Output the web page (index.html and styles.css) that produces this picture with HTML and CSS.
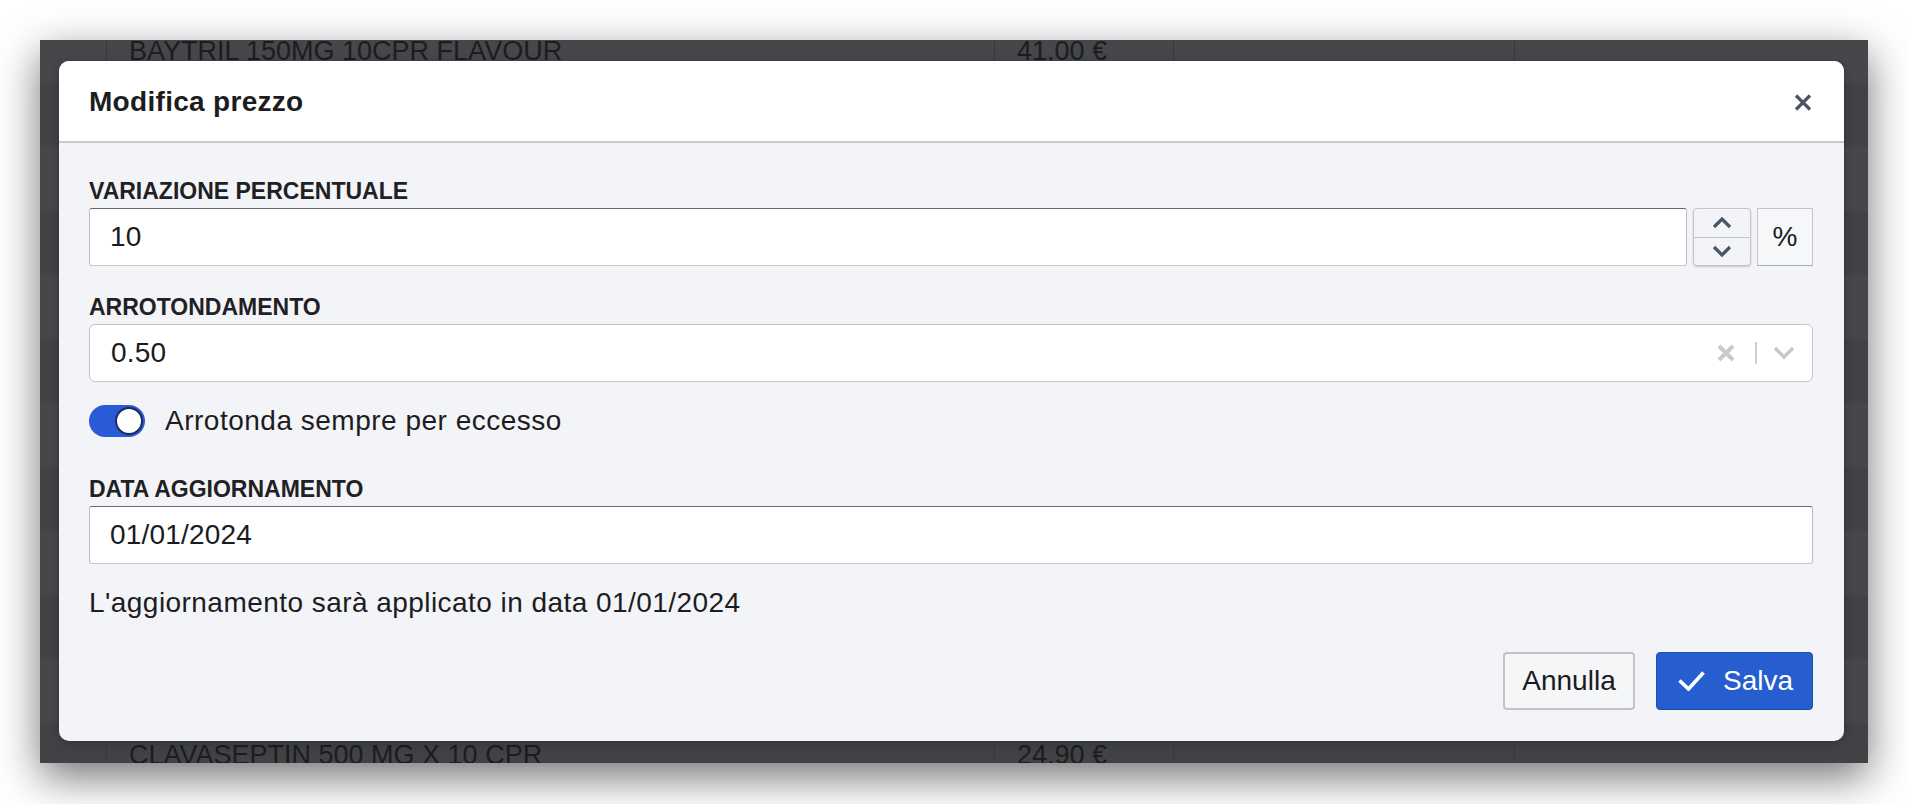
FILE: index.html
```html
<!DOCTYPE html>
<html lang="it">
<head>
<meta charset="utf-8">
<title>Modifica prezzo</title>
<link rel="stylesheet" href="styles.css">
</head>
<body>
<div class="stage">
  <div class="backdrop">
    <div class="table">
      <div class="row light"><span class="cell"></span><span class="cell">BAYTRIL 150MG 10CPR FLAVOUR</span><span class="cell">41.00 €</span><span class="cell"></span><span class="cell"></span></div>
      <div class="row dark"><span class="cell"></span><span class="cell"></span><span class="cell"></span><span class="cell"></span><span class="cell"></span></div>
      <div class="row light"><span class="cell"></span><span class="cell"></span><span class="cell"></span><span class="cell"></span><span class="cell"></span></div>
      <div class="row dark"><span class="cell"></span><span class="cell"></span><span class="cell"></span><span class="cell"></span><span class="cell"></span></div>
      <div class="row light"><span class="cell"></span><span class="cell"></span><span class="cell"></span><span class="cell"></span><span class="cell"></span></div>
      <div class="row dark"><span class="cell"></span><span class="cell"></span><span class="cell"></span><span class="cell"></span><span class="cell"></span></div>
      <div class="row light"><span class="cell"></span><span class="cell"></span><span class="cell"></span><span class="cell"></span><span class="cell"></span></div>
      <div class="row dark"><span class="cell"></span><span class="cell"></span><span class="cell"></span><span class="cell"></span><span class="cell"></span></div>
      <div class="row light"><span class="cell"></span><span class="cell"></span><span class="cell"></span><span class="cell"></span><span class="cell"></span></div>
      <div class="row dark"><span class="cell"></span><span class="cell"></span><span class="cell"></span><span class="cell"></span><span class="cell"></span></div>
      <div class="row light"><span class="cell"></span><span class="cell"></span><span class="cell"></span><span class="cell"></span><span class="cell"></span></div>
      <div class="row dark"><span class="cell"></span><span class="cell">CLAVASEPTIN 500 MG X 10 CPR</span><span class="cell">24.90 €</span><span class="cell"></span><span class="cell"></span></div>
    </div>

    <div class="modal">
      <div class="modal-header">
        <h2 class="modal-title">Modifica prezzo</h2>
        <button class="close-btn" aria-label="Chiudi">
          <svg width="18" height="17" viewBox="0 0 18 17"><path d="M2 1.5 L16 15.5 M16 1.5 L2 15.5" stroke="#4a5466" stroke-width="3.2" fill="none"/></svg>
        </button>
      </div>
      <div class="modal-body">
        <div class="field">
          <div class="field-label">VARIAZIONE PERCENTUALE</div>
          <div class="input-group">
            <div class="text-input">10</div>
            <div class="spinner">
              <div class="spin-half">
                <svg width="20" height="12" viewBox="0 0 20 12"><path d="M2 10 L10 2 L18 10" stroke="#4a5568" stroke-width="3.2" fill="none"/></svg>
              </div>
              <div class="spin-half spin-bottom">
                <svg width="20" height="12" viewBox="0 0 20 12"><path d="M2 2 L10 10 L18 2" stroke="#4a5568" stroke-width="3.2" fill="none"/></svg>
              </div>
            </div>
            <div class="addon">%</div>
          </div>
        </div>

        <div class="field field-gap">
          <div class="field-label">ARROTONDAMENTO</div>
          <div class="select">
            <div class="select-value">0.50</div>
            <svg class="clear-icon" width="18" height="18" viewBox="0 0 18 18"><path d="M2 2 L16 16 M16 2 L2 16" stroke="#c9c9c9" stroke-width="4" fill="none"/></svg>
            <span class="select-sep"></span>
            <svg class="chev-icon" width="22" height="14" viewBox="0 0 22 14"><path d="M2 2 L11 11 L20 2" stroke="#c9c9c9" stroke-width="3.4" fill="none"/></svg>
          </div>
        </div>

        <div class="toggle-row">
          <span class="toggle"><span class="knob"></span></span>
          <span class="toggle-text">Arrotonda sempre per eccesso</span>
        </div>

        <div class="field field-gap-lg">
          <div class="field-label">DATA AGGIORNAMENTO</div>
          <div class="text-input">01/01/2024</div>
        </div>

        <p class="note">L'aggiornamento sarà applicato in data 01/01/2024</p>

        <div class="footer">
          <button class="btn btn-secondary">Annulla</button>
          <button class="btn btn-primary">
            <svg width="27" height="20" viewBox="0 0 27 20"><path d="M1.5 9.5 L10.5 18 L25.5 1.5" stroke="#ffffff" stroke-width="3.6" fill="none"/></svg>
            <span>Salva</span>
          </button>
        </div>
      </div>
    </div>
  </div>
</div>
</body>
</html>
```

FILE: styles.css
```css
* { box-sizing: border-box; }

html, body {
  margin: 0;
  padding: 0;
  background: #ffffff;
  width: 1908px;
  height: 804px;
  overflow: hidden;
  font-family: "Liberation Sans", Arial, sans-serif;
}

.stage {
  padding: 40px 40px 0 40px;
}

.backdrop {
  position: relative;
  height: 723px;
  background: #434549;
  overflow: hidden;
  box-shadow: 0 14px 40px rgba(0, 0, 0, 0.55);
}

.table {
  margin-top: -21px;
}

.row {
  display: grid;
  grid-template-columns: 67px 888px 179px 341px 1fr;
  height: 64px;
  line-height: 64px;
  font-size: 27px;
  color: #1c1d20;
  white-space: nowrap;
}

.row.light { background: #45474b; }
.row.dark { background: #414246; }

.cell {
  border-right: 1px solid #38393d;
  padding-left: 22px;
  overflow: hidden;
}
.cell:last-child { border-right: none; }

.modal {
  position: absolute;
  left: 19px;
  top: 21px;
  width: 1785px;
  border-radius: 10px;
  overflow: hidden;
  background: #f3f4f8;
  box-shadow: 0 2px 10px rgba(0, 0, 0, 0.25);
}

.modal-header {
  height: 82px;
  background: #ffffff;
  border-bottom: 2px solid #c9cacf;
  display: flex;
  align-items: center;
  justify-content: space-between;
  padding: 2px 32px 0 30px;
}

.modal-title {
  margin: 0;
  font-size: 28px;
  font-weight: 700;
  letter-spacing: 0.3px;
  color: #1c1d20;
}

.close-btn {
  border: none;
  background: transparent;
  padding: 0;
  display: flex;
  width: 18px;
  height: 17px;
}

.modal-body {
  padding: 34px 31px 31px 30px;
}

.field-label {
  font-size: 23px;
  line-height: 28px;
  font-weight: 700;
  color: #1f2124;
  margin-bottom: 3px;
}

.field-gap { margin-top: 27px; }
.field-gap-lg { margin-top: 38px; }

.input-group {
  display: flex;
  gap: 6px;
  height: 58px;
}

.text-input {
  flex: 1;
  height: 58px;
  background: #ffffff;
  border: 1px solid #bcbdc1;
  border-top-color: #66686c;
  border-bottom-color: #c4c5c9;
  border-radius: 3px;
  padding: 0 20px;
  font-size: 28px;
  letter-spacing: 0.2px;
  line-height: 56px;
  color: #1a1b1e;
}

.spinner {
  width: 58px;
  height: 58px;
  border: 1px solid #c3c5ca;
  border-radius: 4px;
  background: #f3f4f7;
  display: flex;
  flex-direction: column;
  box-shadow: 0 1px 2px rgba(0, 0, 0, 0.18);
}

.spin-half {
  flex: 1;
  display: flex;
  align-items: center;
  justify-content: center;
}

.spin-bottom {
  border-top: 1px solid #c3c5ca;
}

.addon {
  width: 56px;
  height: 58px;
  background: #f6f7f9;
  border: 1px solid #c4c6ca;
  border-bottom-color: #a9acb1;
  display: flex;
  align-items: center;
  justify-content: center;
  font-size: 28px;
  color: #1a1b1e;
}

.select {
  height: 58px;
  background: #ffffff;
  border: 1px solid #c3c4c8;
  border-radius: 6px;
  display: flex;
  align-items: center;
  padding: 0 17px 0 21px;
}

.select-value {
  flex: 1;
  font-size: 28px;
  letter-spacing: 0.2px;
  color: #1a1b1e;
}

.clear-icon { margin-right: 20px; }

.select-sep {
  width: 2px;
  height: 22px;
  background: #cfcfcf;
  margin-right: 16px;
}

.toggle-row {
  margin-top: 23px;
  display: flex;
  align-items: center;
  gap: 20px;
  height: 32px;
}

.toggle {
  width: 56px;
  height: 32px;
  border-radius: 16px;
  background: #2a5bd7;
  display: flex;
  align-items: center;
  justify-content: flex-end;
  padding: 2px;
}

.knob {
  width: 28px;
  height: 28px;
  border-radius: 50%;
  background: #ffffff;
  border: 2px solid #1c2b5e;
}

.toggle-text {
  font-size: 28px;
  line-height: 32px;
  letter-spacing: 0.5px;
  color: #1c1d20;
}

.note {
  margin: 23px 0 0 0;
  font-size: 28px;
  line-height: 32px;
  letter-spacing: 0.45px;
  color: #1c1d20;
}

.footer {
  margin-top: 33px;
  display: flex;
  justify-content: flex-end;
  gap: 21px;
}

.btn {
  height: 58px;
  font-family: "Liberation Sans", Arial, sans-serif;
  font-size: 28px;
  border-radius: 4px;
  display: flex;
  align-items: center;
  cursor: pointer;
}

.btn-secondary {
  width: 132px;
  justify-content: center;
  background: #f5f6f8;
  border: 2px solid #c2c3c7;
  color: #1a1b1e;
}

.btn-primary {
  width: 157px;
  padding: 0 0 0 21px;
  gap: 18px;
  background: #265dcf;
  border: 1px solid #1d4ea8;
  color: #ffffff;
}
```
